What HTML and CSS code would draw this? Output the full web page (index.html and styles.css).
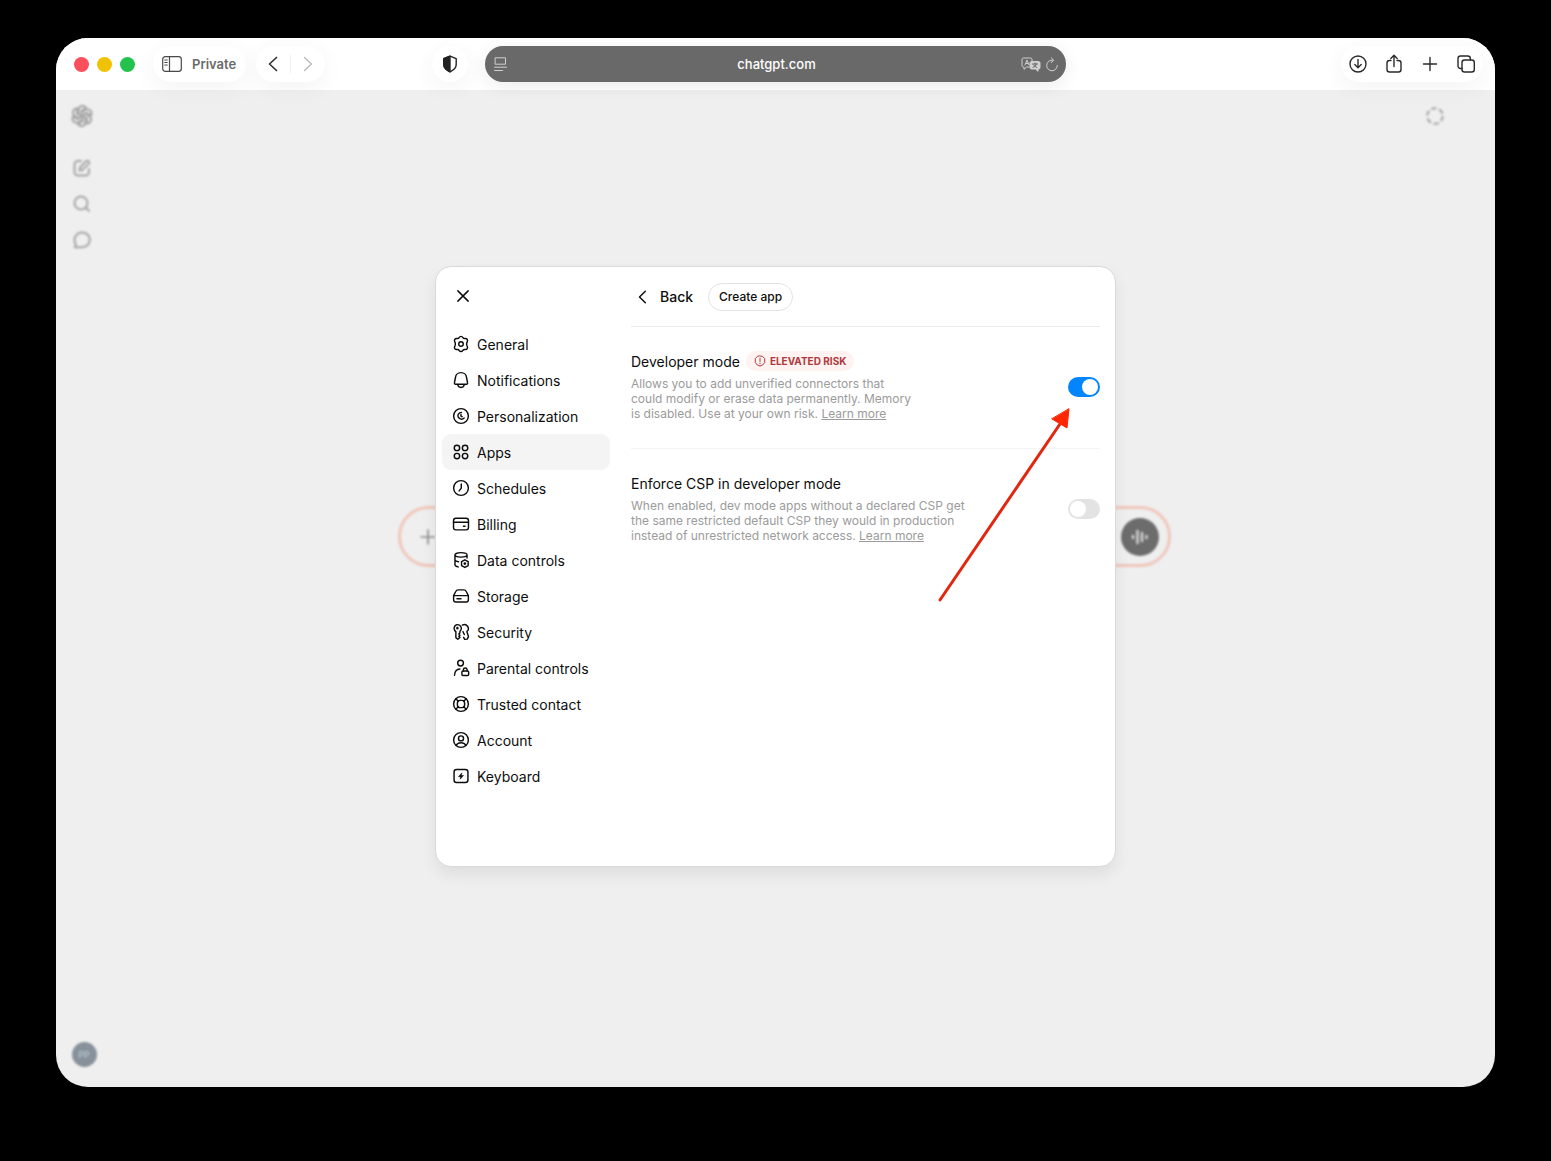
FILE: index.html
```html
<!DOCTYPE html>
<html lang="en">
<head>
  <meta charset="utf-8">
  <title>chatgpt.com</title>
  <link rel="stylesheet" href="styles.css">
</head>
<body>

<div class="window">
  <!-- Browser toolbar -->
  <header class="toolbar">
    <div class="toolbar-left">
      <div class="lights">
        <span class="light red"></span>
        <span class="light yellow"></span>
        <span class="light green"></span>
      </div>
      <button class="pill private">
        <svg width="20" height="16" viewBox="0 0 20 16"><rect x=".7" y=".7" width="18.6" height="14.6" rx="2.6"/><path d="M7.5 1v14M2.8 4h2.4M2.8 6.5h2.4M2.8 9h2.4"/></svg>
        Private
      </button>
      <div class="pill history">
        <button aria-label="Back"><svg width="10" height="16" viewBox="0 0 10 16"><path d="M8.5 1.5 1.5 8l7 6.5" stroke-width="1.7"/></svg></button>
        <span class="split"></span>
        <button class="dim" aria-label="Forward"><svg width="10" height="16" viewBox="0 0 10 16"><path d="m1.500 1.500 7 6.500-7 6.500"/></svg></button>
      </div>
      <button class="pill shield" aria-label="Privacy report">
        <svg width="16" height="18" viewBox="0 0 16 18"><path d="M8 1.2 14.2 3.6v6c0 3.6-3 5.8-6.2 7.2-3.2-1.4-6.2-3.6-6.2-7.2v-6z"/><path class="solid" d="M8 1.2v15.6c-3.2-1.4-6.2-3.6-6.2-7.2v-6z"/></svg>
      </button>
    </div>

    <div class="address">
      <div class="address-side">
        <button aria-label="Page menu"><svg width="13" height="15" viewBox="0 0 13 15"><rect x="1.5" y=".8" width="10" height="6.4"/><path d="M.5 10.2h12M.5 13.5h8"/></svg></button>
      </div>
      <input type="text" value="chatgpt.com" aria-label="Address">
      <div class="address-side end">
        <button aria-label="Translate"><svg width="20" height="15" viewBox="0 0 20 15"><path d="M8 10H5.5L3 12.3V10h-.5A1.500 1.500 0 0 1 1 8.500v-6A1.500 1.500 0 0 1 2.500 1h7A1.500 1.500 0 0 1 11 2.500V4M4 8l2-5 2 5M4.700 6.500h2.600"/><path class="solid" d="M10.500 4.500h7A1.500 1.500 0 0 1 19 6v4.500a1.500 1.500 0 0 1-1.500 1.500H17v2.300L14.500 12h-4A1.500 1.500 0 0 1 9 10.500V6a1.500 1.500 0 0 1 1.500-1.500z"/><path class="cut" d="M11.500 7h5M14 5.800V7M12 10.300c2-.7 3-1.800 3.400-3.300M12.600 8c.8 1.200 1.800 2 3.200 2.300"/></svg></button>
        <button aria-label="Reload"><svg width="14" height="15" viewBox="0 0 14 15"><path d="M12.300 8.500A5.300 5.300 0 1 1 7 3.200h1M6.200.8 8.700 3.200 6.200 5.700"/></svg></button>
      </div>
    </div>

    <div class="toolbar-right">
      <div class="pill actions">
        <button aria-label="Downloads"><svg width="18" height="20" viewBox="0 0 18 20"><circle cx="9" cy="10" r="8"/><path d="M9 5.5v8M5.800 10.500 9 13.700l3.200-3.200"/></svg></button>
        <button aria-label="Share"><svg width="18" height="20" viewBox="0 0 18 20"><path d="M6 6.500H4.500A2.500 2.500 0 0 0 2 9v6.500A2.500 2.500 0 0 0 4.500 18h9a2.500 2.500 0 0 0 2.500-2.500V9a2.500 2.500 0 0 0-2.500-2.500H12M9 12.500v-11M5.800 4.500 9 1.300l3.200 3.200"/></svg></button>
        <button aria-label="New tab"><svg width="18" height="20" viewBox="0 0 18 20"><path d="M9 3.500v13M2.500 10h13"/></svg></button>
        <button aria-label="Tab overview"><svg width="18" height="20" viewBox="0 0 18 20"><rect x="5" y="6" width="12.3" height="12" rx="2.5"/><path d="M5 14.500H3.500A2.500 2.500 0 0 1 1 12V4.500A2.500 2.500 0 0 1 3.500 2h7.300a2.500 2.500 0 0 1 2.500 2.500V6"/></svg></button>
      </div>
    </div>
  </header>

  <div class="page">
    <!-- Page behind the dialog -->
    <div class="backdrop">
      <aside class="rail">
        <svg class="logo" width="22" height="22" viewBox="0 0 22 22">
          <g transform="translate(11 11)">
            <path id="petal" d="M-3.500-1.500v-4.500a4 4 0 0 1 7.500-2L-.5-5.500v5"/>
            <use href="#petal" transform="rotate(60)"/>
            <use href="#petal" transform="rotate(120)"/>
            <use href="#petal" transform="rotate(180)"/>
            <use href="#petal" transform="rotate(240)"/>
            <use href="#petal" transform="rotate(300)"/>
          </g>
        </svg>
        <svg width="20" height="20" viewBox="0 0 20 20"><path d="M9 3H6a3.500 3.500 0 0 0-3.500 3.500V14A3.500 3.500 0 0 0 6 17.500h7.500A3.500 3.500 0 0 0 17 14v-3M7.500 12.500l.5-3 6-6.200a1.800 1.800 0 0 1 2.700 2.600l-6.200 6z"/></svg>
        <svg width="20" height="20" viewBox="0 0 20 20"><circle cx="9" cy="9" r="6.5"/><path d="m13.500 13.500 3.500 3.300"/></svg>
        <svg width="20" height="20" viewBox="0 0 20 20"><path d="M10.200 2.500c4.400 0 7.600 3.100 7.600 7.300s-3.200 7.400-7.600 7.400H2.800l1.100-2.700C3 13.300 2.500 11.700 2.500 9.900c0-4.200 3.300-7.400 7.700-7.400z"/></svg>
        <span class="avatar">PP</span>
      </aside>
      <main class="chat">
        <div class="chat-top">
          <svg class="ring" width="20" height="20" viewBox="0 0 20 20"><circle cx="10" cy="10" r="7.800" stroke-dasharray="5.6 2.568"/></svg>
        </div>
        <div class="chat-body">
          <div class="composer">
            <svg width="20" height="20" viewBox="0 0 20 20"><path d="M10 3v14M3 10h14"/></svg>
            <span class="voice"><svg width="20" height="20" viewBox="0 0 20 20"><path d="M3 9v2M7.500 4v12M12 6v8M16.500 9v2"/></svg></span>
          </div>
        </div>
      </main>
    </div>

    <!-- Settings dialog -->
    <div class="overlay">
      <div class="dialog" role="dialog" aria-label="Settings">
        <div class="side">
          <button class="close" aria-label="Close"><svg width="18" height="18" viewBox="0 0 20 20"><path d="m4.300 4.300 11.400 11.400M15.700 4.300 4.300 15.700"/></svg></button>
          <nav class="menu">
            <button><svg width="18" height="18" viewBox="0 0 20 20"><path d="M10 1.500c1 0 1.600.5 2.100 1.300.4.700 1 1.100 1.800 1.100h1c1.900 0 2.900 1.700 2.100 3.400l-.4.900c-.5 1.200-.5 2.400 0 3.600l.4.900c.8 1.700-.2 3.400-2.100 3.400h-1c-.8 0-1.400.4-1.800 1.100-.5.800-1.100 1.300-2.100 1.300s-1.600-.5-2.100-1.300c-.4-.7-1-1.100-1.800-1.100h-1c-1.900 0-2.900-1.700-2.100-3.400l.4-.9c.5-1.200.5-2.400 0-3.600L3 7.300c-.8-1.700.2-3.400 2.100-3.400h1c.8 0 1.400-.4 1.800-1.100.5-.8 1.100-1.300 2.100-1.300z"/><circle cx="10" cy="10" r="2.5"/></svg>General</button>
            <button><svg width="18" height="18" viewBox="0 0 20 20"><path d="M10 1.800a6.200 6.200 0 0 0-6.200 5.700L2.700 13.200c-.2.800.4 1.600 1.200 1.600h12.200c.8 0 1.400-.8 1.200-1.600L16.200 7.500A6.200 6.200 0 0 0 10 1.800zM6.300 15c.3 2 1.800 3.300 3.700 3.300s3.400-1.300 3.700-3.300"/></svg>Notifications</button>
            <button><svg width="18" height="18" viewBox="0 0 20 20"><circle cx="10" cy="10" r="8.200"/><path d="M10.500 6.200C7.300 6.300 5.800 9 7 11.300c1.300 2.500 4.600 3 6.500 1M10 8.500c-.5 1.200.2 2.100 1.300 2.200"/></svg>Personalization</button>
            <button class="active"><svg width="18" height="18" viewBox="0 0 20 20"><circle cx="5.500" cy="5.500" r="3"/><circle cx="14.500" cy="5.500" r="3"/><circle cx="5.500" cy="14.500" r="3"/><circle cx="14.500" cy="14.500" r="3"/></svg>Apps</button>
            <button><svg width="18" height="18" viewBox="0 0 20 20"><circle cx="10" cy="10" r="8.200"/><path d="M10.300 5.500v4.700l-2.300 3"/></svg>Schedules</button>
            <button><svg width="18" height="18" viewBox="0 0 20 20"><rect x="1.700" y="3.700" width="16.600" height="12.800" rx="2.600"/><path d="M1.700 8h16.600M12.700 12.500h1.800"/></svg>Billing</button>
            <button><svg width="18" height="18" viewBox="0 0 20 20"><path d="M3.300 4.300c0-3.300 13.400-3.300 13.400 0s-13.400 3.300-13.400 0zM3.300 4.300v11c0 1.200 1.500 2 3.700 2.300M16.700 4.300v3.500M3.300 9.800c0 1 1.600 1.800 4 2.100"/><path d="m14.300 9.800 3.700 2.100v4.300l-3.700 2.100-3.700-2.100v-4.300z"/><circle cx="14.300" cy="14" r=".8"/></svg>Data controls</button>
            <button><svg width="18" height="18" viewBox="0 0 20 20"><path d="M1.800 9.500 4 5.300C4.600 4 5.600 3.200 7 3.200h6c1.400 0 2.400.8 3 2.100l2.200 4.200v4.700a2.500 2.500 0 0 1-2.500 2.500H4.300a2.500 2.500 0 0 1-2.500-2.500zM1.800 9.600h16.400M5.500 13h4.500"/></svg>Storage</button>
            <button><svg width="18" height="18" viewBox="0 0 20 20"><path d="M6 1.800a4.200 4.200 0 0 1 2.800 7.400v1.600L7.600 12.300l1.200 1.300-1.200 1.300 1.200 1.200L6.500 18l-2.200-1.800V9.500A4.200 4.200 0 0 1 6 1.800zM11.500 2.300a4.400 4.400 0 0 1 5 7.200l1.800 5.600-1.400 2.800-2.800.3-1.200-2.200"/><path d="m13.700 12.800-1.600-3.300"/><circle cx="6" cy="5.700" r=".6"/></svg>Security</button>
            <button><svg width="18" height="18" viewBox="0 0 20 20"><circle cx="9.500" cy="4.500" r="3.200"/><path d="M2.800 18c.2-3.900 2.400-6.500 6-6.800"/><rect x="11" y="13.300" width="7.500" height="5" rx="1.200"/><path d="M12.700 13.300v-1.500c0-2.400 4-2.400 4 0v1.500"/></svg>Parental controls</button>
            <button><svg width="18" height="18" viewBox="0 0 20 20"><circle cx="10" cy="10" r="8.200"/><rect x="6" y="6" width="8" height="8" rx="3"/><path d="m4.200 4.200 2.800 2.800M15.800 4.200 13 7M4.200 15.800 7 13M15.800 15.800 13 13"/></svg>Trusted contact</button>
            <button><svg width="18" height="18" viewBox="0 0 20 20"><circle cx="10" cy="10" r="8.200"/><circle cx="10" cy="8.200" r="2.800"/><path d="M4.500 16c1.200-2 3.100-3 5.500-3s4.300 1 5.500 3"/></svg>Account</button>
            <button><svg width="18" height="18" viewBox="0 0 20 20"><rect x="2.300" y="2.700" width="15.400" height="14.600" rx="2.800"/><path class="solid" d="M10.800 6.800 7.200 10.700h2.300l-.3 2.800 3.600-4.100h-2.300z" stroke-width=".6"/></svg>Keyboard</button>
          </nav>
        </div>

        <section class="content">
          <div class="content-head">
            <button class="back"><svg width="18" height="18" viewBox="0 0 20 20"><path d="M11.500 3.500 5 10l6.500 6.500"/></svg>Back</button>
            <button class="create">Create app</button>
          </div>

          <div class="setting">
            <div class="setting-text">
              <div class="setting-title">
                <label for="dev-mode">Developer mode</label>
                <span class="badge"><svg width="12" height="12" viewBox="0 0 12 12"><path d="M6 1 8.700 1.500 10.700 3.500v4L8.600 10 6 11 3.400 10 1.300 7.500v-4l2-2zM6 3.300v3.200M6 8v.6"/></svg>ELEVATED RISK</span>
              </div>
              <p>Allows you to add unverified connectors that<br>could modify or erase data permanently. Memory<br>is disabled. Use at your own risk. <a href="#">Learn more</a></p>
            </div>
            <input class="switch" type="checkbox" id="dev-mode" checked>
          </div>

          <div class="setting">
            <div class="setting-text">
              <div class="setting-title">
                <label for="enforce-csp">Enforce CSP in developer mode</label>
              </div>
              <p>When enabled, dev mode apps without a declared CSP get<br>the same restricted default CSP they would in production<br>instead of unrestricted network access. <a href="#">Learn more</a></p>
            </div>
            <input class="switch" type="checkbox" id="enforce-csp">
          </div>
        </section>

        <svg class="arrow" width="136" height="200" viewBox="0 0 136 200">
          <path d="M4 195 124 19"/>
          <path class="head" d="M133 4 131 23 116 14z"/>
        </svg>
      </div>
    </div>
  </div>
</div>

</body>
</html>
```

FILE: styles.css
```css
* {
  box-sizing: border-box;
}

body {
  margin: 0;
  padding: 38px 56px 74px;
  min-height: 100vh;
  display: flex;
  background: #000;
  color: #0d0d0d;
  font-family: Inter, "Liberation Sans", sans-serif;
  font-size: 14px;
}

button {
  display: flex;
  align-items: center;
  padding: 0;
  border: none;
  background: none;
  color: inherit;
  font: inherit;
  cursor: pointer;
}

svg {
  display: block;
  flex: none;
  fill: none;
  stroke: currentColor;
  stroke-width: 1.4;
  stroke-linecap: round;
  stroke-linejoin: round;
}

svg .solid {
  fill: currentColor;
}

.window {
  flex: 1;
  min-width: 0;
  display: flex;
  flex-direction: column;
  border-radius: 32px;
  overflow: hidden;
  background: #efefef;
}

/* Toolbar */
.toolbar {
  position: relative;
  z-index: 1;
  display: grid;
  grid-template-columns: 1fr minmax(0, 581px) 1fr;
  align-items: center;
  height: 52px;
  background: #fff;
}

.toolbar-left,
.toolbar-right {
  display: flex;
  align-items: center;
}

.toolbar-left {
  padding: 0 17px 0 18px;
}

.toolbar-right {
  justify-content: flex-end;
  padding-right: 12px;
}

.lights {
  display: flex;
  gap: 8px;
  margin-right: 18px;
}

.light {
  width: 15px;
  height: 15px;
  border-radius: 50%;
}

.light.red { background: #fb4f5c; }
.light.yellow { background: #f0c205; }
.light.green { background: #22c24c; }

.pill {
  height: 36px;
  border-radius: 18px;
  background: #fff;
  box-shadow: 0 6px 24px rgba(0, 0, 0, 0.05);
}

.private {
  gap: 10px;
  padding: 0 10px 0 9px;
  color: #6b6b6b;
  font-size: 13px;
  font-weight: 600;
}

.private svg {
  color: #4a4a4a;
  stroke-width: 1.2;
}

.history {
  display: flex;
  align-items: center;
  gap: 12px;
  margin-left: 10px;
  padding: 0 12px;
  color: #333;
}

.split {
  width: 1px;
  height: 18px;
  background: #efefef;
}

.dim {
  color: #bbb;
}

.shield {
  margin-left: auto;
  padding: 0 10px;
  color: #222;
}

.address {
  display: flex;
  align-items: center;
  height: 36px;
  padding: 0 7px 0 9px;
  border-radius: 18px;
  background: #696969;
  color: #d0d0d0;
  box-shadow: 0 4px 20px rgba(0, 0, 0, 0.08);
}

.address svg {
  stroke-width: 1;
}

.address .cut {
  stroke: #696969;
}

.address-side {
  flex: 0 0 44px;
  display: flex;
  align-items: center;
  gap: 4px;
}

.address-side.end {
  justify-content: flex-end;
}

.address input {
  flex: 1;
  min-width: 0;
  padding: 0;
  border: none;
  outline: none;
  background: none;
  color: #fff;
  font: inherit;
  font-size: 13px;
  font-weight: 500;
  text-align: center;
}

.actions {
  display: flex;
  align-items: center;
  gap: 18px;
  padding: 0 8px;
  color: #2a2a2a;
}

/* Page behind the dialog */
.page {
  flex: 1;
  position: relative;
  display: flex;
}

.backdrop {
  flex: 1;
  display: flex;
  color: #a6a6a6;
  filter: blur(1px);
}

.backdrop svg {
  stroke-width: 2;
}

.rail {
  width: 52px;
  display: flex;
  flex-direction: column;
  align-items: center;
  gap: 16px;
  padding: 15px 0 20px;
}

.rail .logo {
  margin-bottom: 15px;
  stroke-width: 2;
}

.avatar {
  display: flex;
  align-items: center;
  justify-content: center;
  width: 25px;
  height: 25px;
  margin: auto 0 0 4px;
  border-radius: 50%;
  background: #87919a;
  color: #b4c2cc;
  font-size: 9px;
  font-weight: 600;
}

.chat {
  flex: 1;
  display: flex;
  flex-direction: column;
  padding-right: 34px;
}

.chat-top {
  display: flex;
  align-items: center;
  justify-content: flex-end;
  height: 52px;
  padding-right: 16px;
}

.ring {
  stroke-linecap: butt;
}

.chat-body {
  flex: 1;
  display: flex;
  align-items: center;
  justify-content: center;
  padding-bottom: 156px;
}

.composer {
  display: flex;
  align-items: center;
  justify-content: space-between;
  width: 100%;
  max-width: 773px;
  height: 61px;
  padding: 0 9px 0 17px;
  border: 3px solid #f0c6ba;
  border-radius: 31px;
}

.composer > svg {
  color: #8c8c8c;
  stroke-width: 1.6;
}

.voice {
  padding: 9px;
  border-radius: 50%;
  background: #6c6c6c;
  color: #d8d8d8;
}

.voice svg {
  stroke-width: 2.4;
}

/* Settings dialog */
.overlay {
  position: absolute;
  inset: 0;
  display: flex;
  align-items: flex-start;
  justify-content: center;
  padding-top: 176px;
}

.dialog {
  position: relative;
  display: flex;
  width: 100%;
  max-width: 681px;
  min-height: 601px;
  border: 1px solid #d9d9d9;
  border-radius: 16px;
  background: #fff;
  box-shadow: 0 8px 16px rgba(0, 0, 0, 0.07);
}

.side {
  flex: 0 0 180px;
  padding: 11px 6px;
}

.close {
  justify-content: center;
  width: 36px;
  height: 36px;
  margin: 0 0 12px 3px;
}

.side svg,
.back svg {
  stroke-width: 1.6;
}

.menu button {
  gap: 7px;
  width: 100%;
  height: 36px;
  padding: 0 10px;
  border-radius: 9px;
}

.menu button.active {
  background: #f4f4f4;
}

.content {
  flex: 1;
  min-width: 0;
  padding: 0 15px;
}

.content-head {
  display: flex;
  align-items: center;
  gap: 15px;
  height: 60px;
  border-bottom: 1px solid #ebebeb;
}

.back {
  gap: 7px;
  padding-left: 4px;
  font-weight: 500;
}

.create {
  height: 28px;
  padding: 0 10px;
  border: 1px solid #e3e3e3;
  border-radius: 14px;
  font-size: 12px;
  font-weight: 500;
}

.setting {
  display: flex;
  align-items: center;
  justify-content: space-between;
  padding: 24px 0 27px;
}

.setting + .setting {
  border-top: 1px solid #f4f4f4;
}

.setting-title {
  display: flex;
  align-items: center;
  gap: 6px;
  height: 20px;
}

.badge {
  display: flex;
  align-items: center;
  gap: 4px;
  height: 20px;
  padding: 0 8px;
  border-radius: 10px;
  background: #fef3f1;
  color: #b0383c;
  font-size: 10px;
  font-weight: 700;
}

.badge svg {
  stroke-width: 1;
}

.setting p {
  margin: 5px 0 0;
  color: #9b9b9b;
  font-size: 12px;
  line-height: 15px;
}

.setting a {
  color: inherit;
}

.switch {
  appearance: none;
  flex: none;
  width: 32px;
  height: 20px;
  margin: 2px 0 0;
  padding: 2px;
  border-radius: 10px;
  background: #e3e3e3;
  cursor: pointer;
}

.switch::before {
  content: "";
  display: block;
  width: 16px;
  height: 16px;
  border-radius: 50%;
  background: #fff;
}

.switch:checked {
  background: #0285ff;
}

.switch:checked::before {
  margin-left: auto;
}

/* Arrow drawn over the dialog, pointing at the first switch */
.arrow {
  position: absolute;
  top: 138px;
  right: 43px;
  color: #e3260f;
  stroke-width: 3;
  pointer-events: none;
}

.arrow .head {
  fill: #ff2600;
  stroke: #ff2600;
  stroke-width: 1;
}
```
